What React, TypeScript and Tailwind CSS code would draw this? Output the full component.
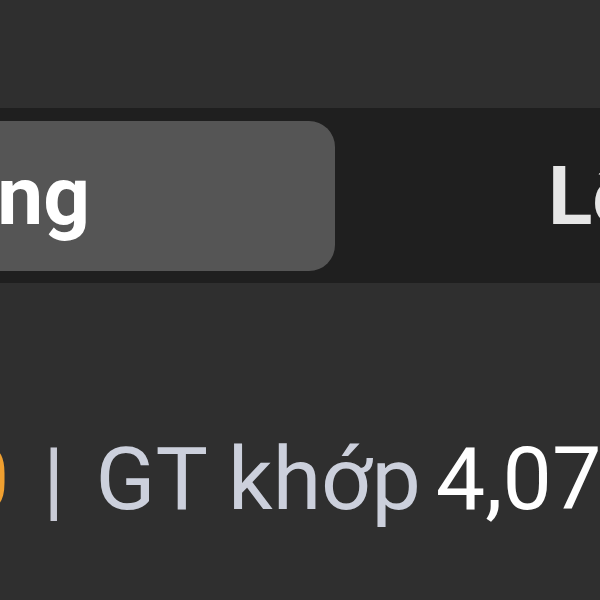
import React from 'react';

const App: React.FC = () => {
  return (
    <div className="w-[600px] h-[600px] overflow-hidden bg-[#2f2f2f] font-['Roboto',sans-serif]">
      {/* Tab switcher */}
      <div className="mt-[108px] h-[175px] bg-[#1f1f1f] flex items-center overflow-hidden">
        <div className="ml-[-200px] w-[535px] h-[150px] shrink-0 rounded-[26px] bg-[#555555] flex items-center justify-end pr-[245px]">
          <span className="text-[82px] font-bold text-white leading-none whitespace-nowrap">Thường</span>
        </div>
        <div className="ml-[213px] shrink-0">
          <span className="text-[82px] font-bold text-[#e6e6e6] leading-none whitespace-nowrap">Lệnh</span>
        </div>
      </div>

      {/* Summary line */}
      <div className="mt-[152px] flex items-baseline whitespace-nowrap text-[88px] leading-none">
        <span className="ml-[-40px] w-[50px] shrink-0 text-[#f0a030]">0</span>
        <span className="ml-[33px] text-[#c9cbd6]">|</span>
        <span className="ml-[31px] text-[#ccd0dc]">GT khớp</span>
        <span className="ml-[15px] text-white">4,075</span>
      </div>
    </div>
  );
};

export default App;
